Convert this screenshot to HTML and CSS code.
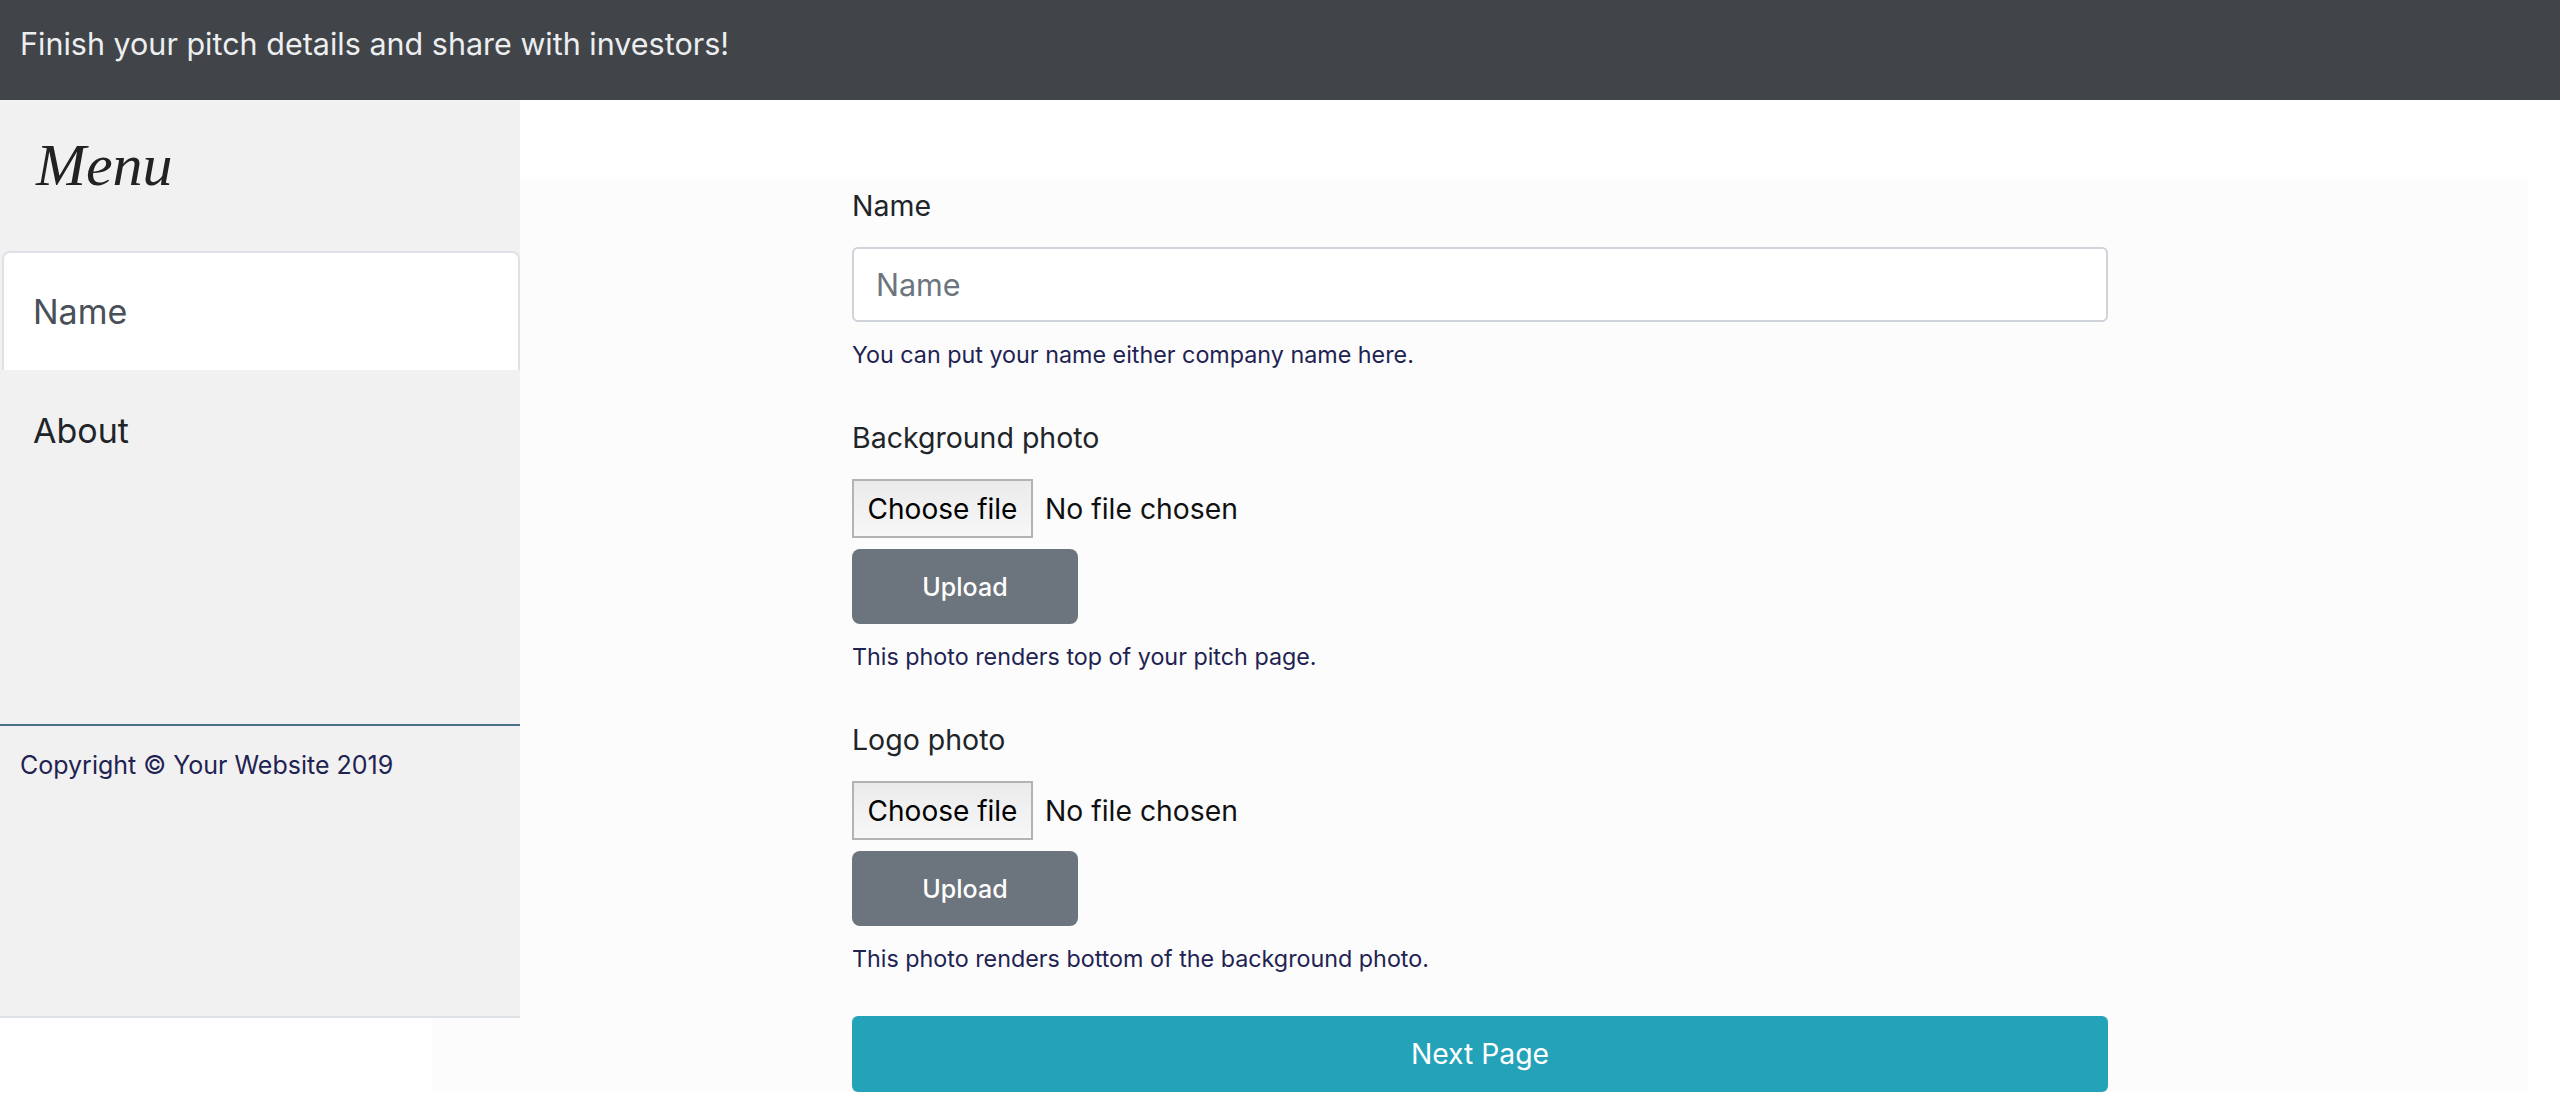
FILE: index.html
```html
<!DOCTYPE html>
<html lang="en">
<head>
<meta charset="utf-8">
<title>Pitch details</title>
<link rel="stylesheet" href="styles.css">
</head>
<body>
<header class="topbar">
  <div class="topbar-title">Finish your pitch details and share with investors!</div>
</header>
<div class="layout">
  <aside class="sidebar">
    <div class="menu-title">Menu</div>
    <nav class="side-nav">
      <a class="side-link active" href="#">Name</a>
      <a class="side-link" href="#">About</a>
    </nav>
    <div class="side-footer">Copyright © Your Website 2019</div>
  </aside>
  <main class="content">
    <form class="pitch-form">
      <div class="group">
        <label class="field-label">Name</label>
        <input class="text-input" type="text" placeholder="Name">
        <div class="help">You can put your name either company name here.</div>
      </div>
      <div class="group">
        <label class="field-label">Background photo</label>
        <div class="file-row"><button type="button" class="file-btn">Choose file</button><span class="file-name">No file chosen</span></div>
        <button type="button" class="upload-btn">Upload</button>
        <div class="help">This photo renders top of your pitch page.</div>
      </div>
      <div class="group">
        <label class="field-label">Logo photo</label>
        <div class="file-row"><button type="button" class="file-btn">Choose file</button><span class="file-name">No file chosen</span></div>
        <button type="button" class="upload-btn">Upload</button>
        <div class="help">This photo renders bottom of the background photo.</div>
      </div>
      <button type="button" class="next-btn">Next Page</button>
    </form>
  </main>
</div>
</body>
</html>
```
FILE: styles.css
```css
* { box-sizing: border-box; }
html, body { margin: 0; padding: 0; background: #ffffff; overflow: hidden; }
body { font-family: Inter, "Noto Sans", sans-serif; color: #212529; }

.topbar {
  height: 100px;
  background: #414549;
  padding: 26px 0 0 20px;
}
.topbar-title {
  font-size: 30.5px;
  line-height: 36px;
  color: #eceef0;
}

.layout {
  display: grid;
  grid-template-columns: 432px 88px 1fr 32px;
  grid-template-rows: 79px auto;
}

.sidebar {
  grid-column: 1 / 3;
  grid-row: 1 / 3;
  align-self: start;
  z-index: 2;
  height: 918px;
  background: #f1f1f1;
  border-bottom: 2px solid #dde1e5;
  display: flex;
  flex-direction: column;
}
.menu-title {
  font-family: "Liberation Serif", "DejaVu Serif", serif;
  font-style: italic;
  font-size: 60px;
  line-height: 58px;
  color: #222222;
  height: 151px;
  padding: 36px 0 0 36px;
}
.side-nav { display: flex; flex-direction: column; }
.side-link {
  display: block;
  height: 119px;
  margin-left: 2px;
  padding: 33px 0 0 29px;
  font-size: 34px;
  line-height: 51px;
  color: #212529;
  text-decoration: none;
  border: 2px solid transparent;
  border-bottom: none;
}
.side-link.active {
  background: #ffffff;
  color: #495057;
  border-color: #dee2e6;
  border-radius: 8px 8px 0 0;
}
.side-footer {
  margin-top: 235px;
  border-top: 2px solid #4b6f87;
  padding: 18px 0 0 20px;
  font-size: 25px;
  line-height: 42px;
  color: #1f2352;
}

.content {
  grid-column: 2 / 4;
  grid-row: 2 / 3;
  background: #fcfcfc;
  padding-top: 6px;
  z-index: 1;
}
.pitch-form {
  width: 1256px;
  margin: 0 auto;
  display: flex;
  flex-direction: column;
}
.group { display: flex; flex-direction: column; align-items: flex-start; margin-bottom: 44px; }
.field-label {
  font-size: 28.5px;
  line-height: 42px;
  margin-bottom: 20px;
  color: #212529;
}
.text-input {
  width: 100%;
  height: 75px;
  border: 2px solid #ced4da;
  border-radius: 6px;
  background: #ffffff;
  padding: 0 22px;
  font-family: Inter, "Noto Sans", sans-serif;
  font-size: 30.5px;
  color: #495057;
  outline: none;
}
.text-input::placeholder { color: #6c757d; }
.help {
  margin-top: 15px;
  font-size: 23.3px;
  line-height: 36px;
  color: #1f2352;
}
.file-row {
  display: flex;
  align-items: center;
  height: 59px;
  margin-bottom: 11px;
}
.file-btn {
  height: 59px;
  width: 181px;
  padding: 0;
  border: 2px solid #b3b3b3;
  border-radius: 0;
  background: linear-gradient(#ebebeb, #f7f7f7);
  font-family: Inter, "Noto Sans", sans-serif;
  font-size: 28px;
  color: #000000;
}
.file-name {
  margin-left: 12px;
  font-size: 28.3px;
  color: #111111;
}
.upload-btn {
  width: 226px;
  height: 75px;
  border: none;
  border-radius: 8px;
  background: #6c757d;
  color: #ffffff;
  font-family: Inter, "Noto Sans", sans-serif;
  font-size: 25px;
  font-weight: 500;
}
.next-btn {
  width: 100%;
  height: 76px;
  margin-top: -5px;
  border: none;
  border-radius: 6px;
  background: #24a2b8;
  color: #ffffff;
  font-family: Inter, "Noto Sans", sans-serif;
  font-size: 28.3px;
}
```
